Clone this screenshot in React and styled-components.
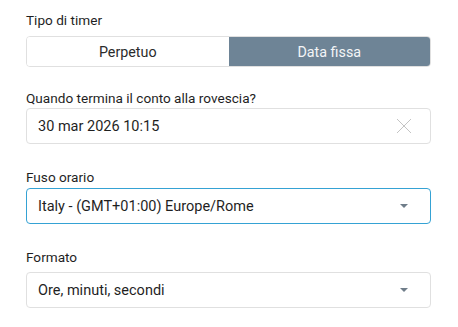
import React from "react";
import styled, { createGlobalStyle } from "styled-components";

const Global = createGlobalStyle`
  html, body { margin: 0; padding: 0; background: #fff; }
  body { font-family: Roboto, "Noto Sans", Arial, sans-serif; color: #1f1f1f; }
`;

const Page = styled.div`
  width: 405px;
  padding: 12px 27px 0 26px;
  display: flex;
  flex-direction: column;
`;

const Field = styled.div`
  display: flex;
  flex-direction: column;
  margin-bottom: ${(p) => p.$after || 0}px;
`;

const Label = styled.div`
  font-size: 13.6px;
  line-height: 16px;
  color: #1f1f1f;
  margin-bottom: ${(p) => p.$gap || 6}px;
`;

const Toggle = styled.div`
  display: flex;
  height: 31px;
  box-sizing: border-box;
  border: 1px solid #e0e0e0;
  border-radius: 4px;
  overflow: hidden;
`;

const Segment = styled.div`
  flex: 1;
  display: flex;
  align-items: center;
  justify-content: center;
  font-size: 14.3px;
  color: ${(p) => (p.$active ? "#f3f5f7" : "#2b2b2b")};
  background: ${(p) => (p.$active ? "#6e8496" : "#fff")};
`;

const Box = styled.div`
  height: 36px;
  box-sizing: border-box;
  border: 1px solid ${(p) => (p.$focus ? "#35a2d4" : "#e0e0e0")};
  border-radius: 4px;
  display: flex;
  align-items: center;
  padding: 0 21px 0 11px;
  font-size: 14.5px;
  color: #1f1f1f;
`;

const Value = styled.span`
  flex: 1;
`;

const Caret = styled.span`
  width: 0;
  height: 0;
  border-left: 4.5px solid transparent;
  border-right: 4.5px solid transparent;
  border-top: 4px solid #6f7d89;
  margin-right: 1px;
`;

const Clear = () => (
  <svg width="16" height="16" viewBox="0 0 16 16" style={{ marginRight: -3 }}>
    <path d="M1 1 L15 15 M15 1 L1 15" stroke="#c4c4c4" strokeWidth="1" fill="none" />
  </svg>
);

export default function App() {
  return (
    <>
      <Global />
      <Page>
        <Field $after={23}>
          <Label $gap={8}>Tipo di timer</Label>
          <Toggle>
            <Segment>Perpetuo</Segment>
            <Segment $active>Data fissa</Segment>
          </Toggle>
        </Field>
        <Field $after={25}>
          <Label $gap={2}>Quando termina il conto alla rovescia?</Label>
          <Box>
            <Value>30 mar 2026 10:15</Value>
            <Clear />
          </Box>
        </Field>
        <Field $after={25}>
          <Label $gap={3}>Fuso orario</Label>
          <Box $focus>
            <Value>Italy - (GMT+01:00) Europe/Rome</Value>
            <Caret />
          </Box>
        </Field>
        <Field>
          <Label $gap={7}>Formato</Label>
          <Box>
            <Value>Ore, minuti, secondi</Value>
            <Caret />
          </Box>
        </Field>
      </Page>
    </>
  );
}
